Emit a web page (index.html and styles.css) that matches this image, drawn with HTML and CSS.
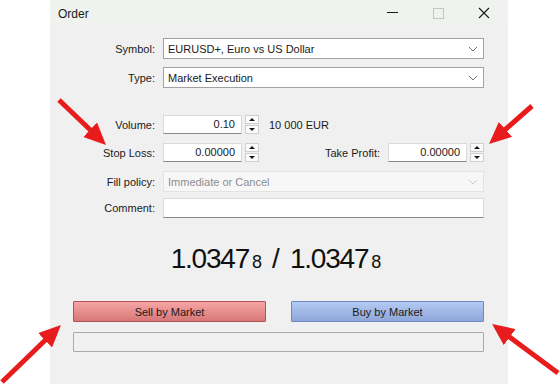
FILE: index.html
```html
<!DOCTYPE html>
<html lang="en">
<head>
    <meta charset="UTF-8">
    <title>Order</title>
    <link rel="stylesheet" href="styles.css">
</head>
<body>
    <div class="window">
        <div class="titlebar">
            <span class="title">Order</span>
            <span class="ctrl ctrl-min"></span>
            <span class="ctrl ctrl-max"></span>
            <span class="ctrl ctrl-close">
                <svg width="12" height="12" viewBox="0 0 12 12"><path d="M1 1 L11 11 M11 1 L1 11" stroke="#1a1a1a" stroke-width="1.1"/></svg>
            </span>
        </div>

        <div class="form">
            <label class="label row-symbol">Symbol:</label>
            <div class="combo row-symbol">
                <span>EURUSD+, Euro vs US Dollar</span>
                <svg class="chev" width="10" height="6" viewBox="0 0 10 6"><polyline points="1,1 5,5 9,1" fill="none" stroke="#707070" stroke-width="1"/></svg>
            </div>

            <label class="label row-type">Type:</label>
            <div class="combo row-type">
                <span>Market Execution</span>
                <svg class="chev" width="10" height="6" viewBox="0 0 10 6"><polyline points="1,1 5,5 9,1" fill="none" stroke="#707070" stroke-width="1"/></svg>
            </div>

            <label class="label row-volume">Volume:</label>
            <div class="field row-volume">
                <div class="input num">0.10</div>
                <div class="spin"><span class="up"></span><span class="down"></span></div>
                <span class="note">10 000 EUR</span>
            </div>

            <label class="label row-sl">Stop Loss:</label>
            <div class="field row-sl">
                <div class="input num">0.00000</div>
                <div class="spin"><span class="up"></span><span class="down"></span></div>
                <label class="label tp-label">Take Profit:</label>
                <div class="input num">0.00000</div>
                <div class="spin"><span class="up"></span><span class="down"></span></div>
            </div>

            <label class="label row-fill">Fill policy:</label>
            <div class="combo disabled row-fill">
                <span>Immediate or Cancel</span>
                <svg class="chev" width="10" height="6" viewBox="0 0 10 6"><polyline points="1,1 5,5 9,1" fill="none" stroke="#c8c8c8" stroke-width="1"/></svg>
            </div>

            <label class="label row-comment">Comment:</label>
            <div class="input wide row-comment"></div>
        </div>

        <div class="price">
            <span>1.0347</span><small>8</small><span class="sep">/</span><span>1.0347</span><small>8</small>
        </div>

        <div class="actions">
            <button class="btn sell">Sell by Market</button>
            <button class="btn buy">Buy by Market</button>
        </div>
        <div class="status"></div>
    </div>

    <svg class="arrows" width="560" height="384" viewBox="0 0 560 384">
        <defs>
            <marker id="head" viewBox="0 0 22 20" markerWidth="22" markerHeight="20" refX="4" refY="10" orient="auto" markerUnits="userSpaceOnUse">
                <path d="M0 0 L22 10 L0 20 Z" fill="#e81c1c"/>
            </marker>
        </defs>
        <line x1="59" y1="100" x2="93" y2="132.5" marker-end="url(#head)"/>
        <line x1="532" y1="106" x2="502.5" y2="132" marker-end="url(#head)"/>
        <line x1="2" y1="382" x2="48" y2="337.5" marker-end="url(#head)"/>
        <line x1="558" y1="373" x2="506.5" y2="334.7" marker-end="url(#head)"/>
    </svg>
</body>
</html>
```

FILE: styles.css
```css
body {
    margin: 0;
    background: #ffffff;
    font-family: "Liberation Sans", Arial, sans-serif;
    font-size: 11px;
    color: #1a1a1a;
    position: relative;
    width: 560px;
    height: 384px;
    overflow: hidden;
}

.window {
    margin-left: 50px;
    width: 458px;
    height: 384px;
    background: #f0f0f0;
}

.titlebar {
    height: 28px;
    background: #eff2ee;
    display: flex;
    align-items: center;
    padding-left: 8px;
}

.title {
    font-size: 12px;
    flex: 1;
}

.ctrl {
    display: inline-block;
    width: 46px;
    height: 28px;
    position: relative;
}

.ctrl-min::after {
    content: "";
    position: absolute;
    left: 17px;
    top: 12px;
    width: 11px;
    height: 1px;
    background: #1a1a1a;
}

.ctrl-max::after {
    content: "";
    position: absolute;
    left: 17px;
    top: 8px;
    width: 9px;
    height: 9px;
    border: 1px solid #c4c4c4;
}

.ctrl-close svg {
    position: absolute;
    left: 16px;
    top: 7px;
}

.form {
    display: grid;
    grid-template-columns: 105px 1fr;
    column-gap: 8px;
    padding: 10px 24px 0 0;
    align-items: center;
}

.label {
    text-align: right;
}

.combo {
    height: 19px;
    background: #ffffff;
    border: 1px solid #a2a2a2;
    display: flex;
    align-items: center;
    padding-left: 4px;
    justify-content: space-between;
}

.combo .chev {
    margin-right: 5px;
}

.combo.disabled {
    background: #f7f7f7;
    border-color: #e3e3e3;
    color: #8d8d8d;
}

.row-type { margin-top: 8px; }
.row-volume { margin-top: 27px; }
.row-sl { margin-top: 9px; }
.row-fill { margin-top: 9px; }
.row-comment { margin-top: 6px; }

.field {
    display: flex;
    align-items: center;
}

.input {
    height: 17px;
    background: #ffffff;
    border: 1px solid #dadada;
    border-bottom-color: #8a8a8a;
    box-sizing: content-box;
}

.input.num {
    width: 71px;
    text-align: right;
    padding-right: 6px;
    line-height: 17px;
}

.input.wide {
    height: 18px;
}

.spin {
    display: flex;
    flex-direction: column;
    gap: 1px;
    margin-left: 3px;
    margin-top: -1px;
}

.spin span {
    width: 12px;
    height: 7px;
    border: 1px solid #cfcfcf;
    background: #fbfbfb;
    position: relative;
}

.spin .up::after,
.spin .down::after {
    content: "";
    position: absolute;
    left: 3px;
    border-left: 3px solid transparent;
    border-right: 3px solid transparent;
}

.spin .up::after {
    top: 2px;
    border-bottom: 3px solid #1a1a1a;
}

.spin .down::after {
    top: 2px;
    border-top: 3px solid #1a1a1a;
}

.note {
    margin-left: 10px;
}

.tp-label {
    width: 121px;
    padding-right: 8px;
}

.price {
    margin-top: 25px;
    text-align: center;
    font-size: 28px;
    letter-spacing: -1.2px;
    color: #101010;
    padding-right: 6px;
}

.price small {
    font-size: 18px;
    letter-spacing: 0;
    margin-left: 3px;
}

.price .sep {
    letter-spacing: 0;
    margin: 0 10px;
}

.actions {
    display: flex;
    justify-content: space-between;
    padding: 0 24px 0 23px;
    margin-top: 26px;
}

.btn {
    width: 193px;
    height: 21px;
    font-family: "Liberation Sans", Arial, sans-serif;
    font-size: 11px;
    color: #1a1a1a;
    border-radius: 1px;
    padding: 0;
}

.sell {
    background: linear-gradient(#f6a5a5, #d87777);
    border: 1px solid #b25454;
}

.buy {
    background: linear-gradient(#b4caf3, #8ea6d9);
    border: 1px solid #6f88bf;
}

.status {
    margin: 10px 24px 0 23px;
    height: 18px;
    border: 1px solid #a9a9a9;
    border-radius: 1px;
}

.arrows {
    position: absolute;
    top: 0;
    left: 0;
    pointer-events: none;
}

.arrows line {
    stroke: #e81c1c;
    stroke-width: 5;
}
```
